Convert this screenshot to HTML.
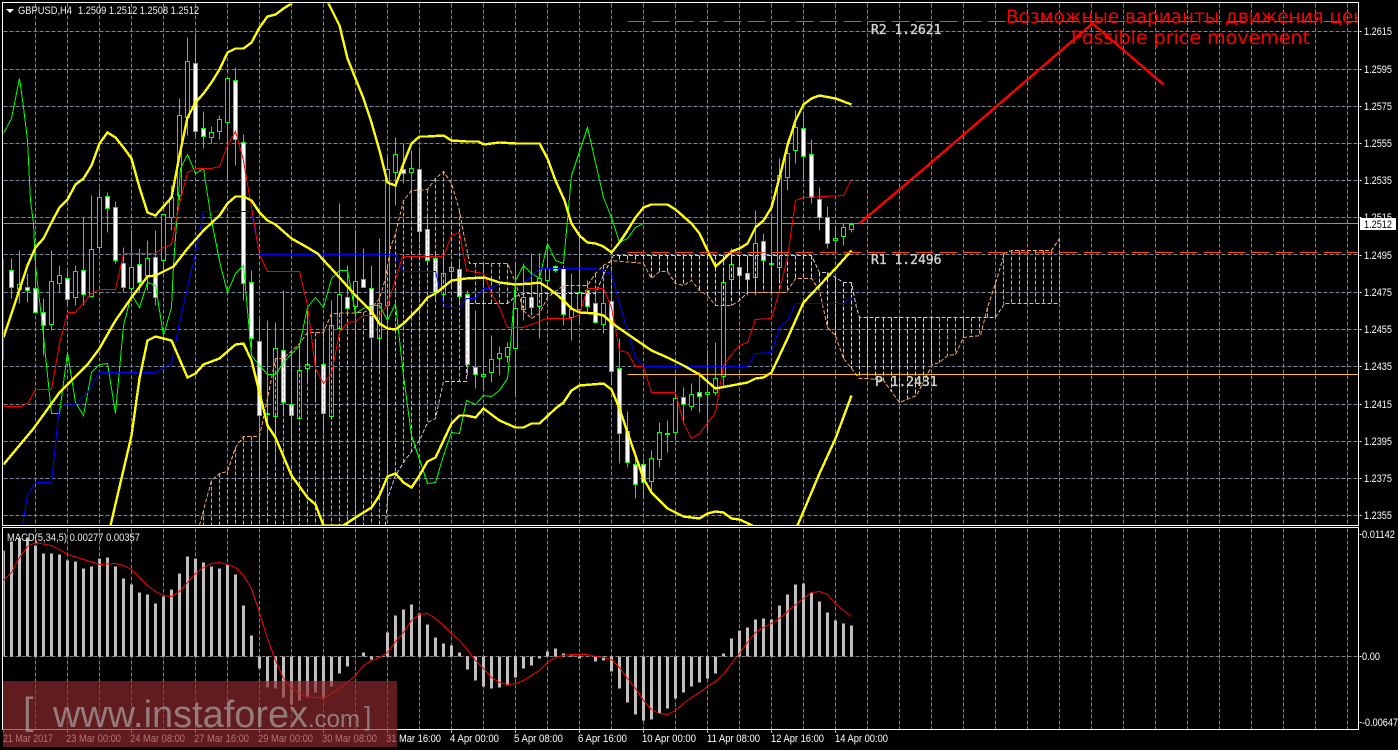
<!DOCTYPE html>
<html><head><meta charset="utf-8"><title>GBPUSD,H4</title>
<style>html,body{margin:0;padding:0;background:#000;width:1398px;height:750px;overflow:hidden}svg{display:block}text{font-family:"Liberation Sans",sans-serif}</style>
</head><body>
<svg width="1398" height="750" viewBox="0 0 1398 750" xmlns="http://www.w3.org/2000/svg">
<defs>
<clipPath id="m"><rect x="3" y="3" width="1355" height="522"/></clipPath>
<clipPath id="d"><rect x="3" y="528" width="1355" height="201"/></clipPath>
</defs>
<rect width="1398" height="750" fill="#000"/>
<g transform="translate(.5 .5)" fill="none" shape-rendering="crispEdges">
<g clip-path="url(#m)">
<path stroke="#778899" stroke-dasharray="4 2" d="M3 31H1358M3 69H1358M3 106H1358M3 143H1358M3 180H1358M3 217H1358M3 254H1358M3 292H1358M3 329H1358M3 366H1358M3 404H1358M3 441H1358M3 478H1358M3 515H1358M35 3V525M67 3V525M99 3V525M131 3V525M163 3V525M195 3V525M227 3V525M259 3V525M291 3V525M323 3V525M355 3V525M387 3V525M419 3V525M451 3V525M483 3V525M515 3V525M547 3V525M579 3V525M611 3V525M643 3V525M675 3V525M707 3V525M739 3V525M771 3V525M803 3V525M835 3V525M867 3V525M899 3V525M931 3V525M963 3V525M995 3V525M1027 3V525M1059 3V525M1091 3V525M1123 3V525M1155 3V525M1187 3V525M1219 3V525M1251 3V525M1283 3V525M1315 3V525M1347 3V525"/>
<path stroke="#8a939a" d="M3 223H1358"/>
<!-- wicks -->
<path stroke="#00ff00" d="M3 258V360M11 258V298M19 250V303M27 273V302M35 243V312M43 298V355M51 250V330M59 265V292M67 270V305M75 265V305M83 217V305M91 195V297M99 188V252M107 192V232M115 201V263M123 247V292M131 230V298M139 248V292M147 240V290M155 230V305M163 214V270M171 185V230M179 98V200M187 37V135M195 32V137M203 111V148M211 126V143M219 115V139M227 78V178M235 67V165M243 134V300M251 270V350M259 318V478M267 320V448M275 322V462M283 290V415M291 352V442M299 345V418M307 305V380M315 340V400M323 325V428M331 300V416M339 203V328M347 265V312M355 230V313M363 248V287M371 265V360M379 238V372M387 157V322M395 137V205M403 143V183M411 150V215M419 146V240M427 217V265M435 250V300M443 250V305M451 262V285M459 260V305M467 290V375M475 310V388M483 303V390M491 335V382M499 346V375M507 342V362M515 263V395M523 263V320M531 253V312M539 253V338M547 243V285M555 265V272M563 265V325M571 273V340M579 233V322M587 280V313M595 290V323M603 287V333M611 290V382M619 338V463M627 411V467M635 458V498M643 458V498M651 450V490M659 422V467M667 420V452M675 379V440M683 387V423M691 383V410M699 372V412M707 350V430M715 342V395M723 268V385M731 248V292M739 255V285M747 258V295M755 210V295M763 233V280M771 213V295M779 158V280M787 140V190M795 110V163M803 112V178M811 139V203M819 187V230M827 206V248M835 225V251M843 223V245M851 222V232"/>
<!-- black bodies -->
<path stroke="#00ff00" fill="#000" d="M17 284h4v5h-4zM49 281h4v43h-4zM57 275h4v8h-4zM73 271h4v26h-4zM89 249h4v47h-4zM97 197h4v50h-4zM129 267h4v21h-4zM145 258h4v17h-4zM161 214h4v46h-4zM169 197h4v20h-4zM177 115h4v80h-4zM185 61h4v56h-4zM209 132h4v5h-4zM217 119h4v12h-4zM225 78h4v44h-4zM265 413h4v1h-4zM273 348h4v68h-4zM297 370h4v48h-4zM305 364h4v4h-4zM329 325h4v91h-4zM337 294h4v34h-4zM353 281h4v25h-4zM377 303h4v35h-4zM385 169h4v136h-4zM393 154h4v18h-4zM409 168h4v4h-4zM441 273h4v21h-4zM449 267h4v4h-4zM481 374h4v2h-4zM489 359h4v13h-4zM497 353h4v5h-4zM505 347h4v9h-4zM513 308h4v40h-4zM521 297h4v12h-4zM537 278h4v28h-4zM545 268h4v12h-4zM569 309h4v8h-4zM577 292h4v17h-4zM601 303h4v21h-4zM649 458h4v23h-4zM657 432h4v27h-4zM665 433h4v1h-4zM673 398h4v34h-4zM689 394h4v12h-4zM705 392h4v2h-4zM713 378h4v14h-4zM721 282h4v94h-4zM729 264h4v15h-4zM753 243h4v34h-4zM777 175h4v92h-4zM785 153h4v24h-4zM793 127h4v23h-4zM833 238h4v2h-4zM841 227h4v9h-4zM849 224h4v5h-4z"/>
<!-- white bodies -->
<path stroke="#00ff00" fill="#fff" d="M9 270h4v17h-4zM25 287h4v3h-4zM33 288h4v24h-4zM41 312h4v13h-4zM65 278h4v21h-4zM81 270h4v24h-4zM105 196h4v12h-4zM113 207h4v53h-4zM121 263h4v24h-4zM137 264h4v18h-4zM153 257h4v40h-4zM193 63h4v68h-4zM201 128h4v8h-4zM233 80h4v59h-4zM241 142h4v141h-4zM249 282h4v56h-4zM257 341h4v74h-4zM281 350h4v52h-4zM289 404h4v11h-4zM321 364h4v49h-4zM345 297h4v11h-4zM361 279h4v8h-4zM369 288h4v49h-4zM401 169h4v4h-4zM417 169h4v62h-4zM425 229h4v31h-4zM433 258h4v34h-4zM457 269h4v27h-4zM465 294h4v70h-4zM473 367h4v7h-4zM529 297h4v10h-4zM553 266h4v4h-4zM561 268h4v46h-4zM585 290h4v16h-4zM593 303h4v19h-4zM609 301h4v70h-4zM617 368h4v65h-4zM625 431h4v31h-4zM633 464h4v20h-4zM641 464h4v18h-4zM681 397h4v7h-4zM697 392h4v4h-4zM737 267h4v8h-4zM745 273h4v6h-4zM761 241h4v19h-4zM769 263h4v1h-4zM801 128h4v28h-4zM809 154h4v43h-4zM817 199h4v18h-4zM825 217h4v26h-4z"/>
<!-- cloud hatch -->
<path stroke="#f4a460" stroke-dasharray="4 2" d="M203 510V525M211 480V525M219 473V525M227 471V525M235 447V525M243 436V525M251 436V525M259 436V525M267 398V525M275 358V525M283 358V525M291 350V525M299 343V525M307 332V525M315 332V525M323 332V525M331 313V525M339 313V525M347 312V525M355 312V525M363 312V525M371 308V525M379 298V525M387 265V498M395 233V475M403 200V462M411 190V451M419 190V440M427 189V422M435 178V418M443 171V381M451 183V381M459 210V381M475 263V303M483 263V303M491 263V303M499 263V303M507 263V303M515 282V300M523 293V310M531 293V318M539 293V313M547 293V297M555 290V293M563 285V293M571 285V293M579 285V293M587 285V293M595 273V293M603 265V293M611 260V293M939 317V362M947 317V355M955 317V354M963 317V337M971 317V336M979 317V335M987 307V317M995 283V317M1003 253V303M1011 250V303M1019 250V303M1027 250V303M1035 250V303M1043 250V303M1051 250V303M1059 238V303"/>
<path stroke="#e8d0d8" stroke-dasharray="4 2" d="M619 255V260M627 255V261M635 255V262M643 255V263M651 255V278M659 255V271M667 255V271M675 255V283M683 255V285M691 255V280M699 255V290M707 255V295M715 255V305M723 255V305M731 255V305M739 255V300M747 255V292M755 255V292M763 255V292M771 255V292M779 255V292M787 255V290M795 255V278M803 255V278M811 255V278M819 272V290M827 272V327M835 277V335M843 282V358M851 282V368M859 317V378M867 317V378M875 317V379M883 317V380M891 317V391M899 317V402M907 317V398M915 317V395M923 317V380M931 317V365"/>
<!-- span B -->
<polyline stroke="#d8bfd8" stroke-dasharray="4 2" points="385,525 387,498 395,475 403,462 411,451 419,440 427,422 435,418 443,381 466,381 467,303 507,303 515,296 523,293 595,293 605,270 613,255 811,255 819,272 827,272 843,282 851,282 856,307 859,317 995,317 1004,303 1059,303"/>
<!-- span A -->
<polyline stroke="#f4a460" stroke-dasharray="4 2" points="199,525 203,510 211,480 219,473 227,471 235,447 243,436 259,436 267,398 275,358 283,358 299,343 307,332 323,332 331,313 363,312 371,308 379,298 385,278 390,247 395,233 403,200 411,190 427,189 435,178 443,171 451,183 459,210 463,233 466,247 469,263 507,263 515,282 523,310 531,318 539,313 547,297 563,285 587,285 595,273 603,265 611,260 643,263 651,278 659,271 667,271 675,283 683,285 691,280 699,290 707,295 715,305 731,305 739,300 747,292 786,292 795,278 811,278 819,290 827,327 835,335 843,358 851,368 859,378 867,378 883,380 899,402 916,395 932,364 939,362 947,355 955,354 963,337 980,335 987,307 995,283 1004,253 1011,250 1051,250 1059,238"/>
<!-- chikou -->
<polyline stroke="#00ff00" points="3,133 11,118 19,78 23,107 27,140 30,200 33,223 35,265 43,335 45,355 51,413 59,413 67,352 75,402 83,415 91,372 99,364 107,363 115,413 123,325 131,294 139,307 147,282 155,285 163,335 171,307 173,265 180,168 187,154 195,173 203,168 211,220 220,265 227,292 235,273 243,265 251,355 259,365 267,374 275,374 283,362 299,345 307,307 315,297 323,307 331,278 339,270 347,270 355,313 363,308 371,305 379,305 387,320 395,303 403,375 411,435 427,483 435,482 443,455 451,432 459,433 466,400 475,404 483,395 491,396 499,390 507,378 509,358 515,280 523,265 531,273 539,278 547,243 555,260 563,263 571,175 587,127 603,197 611,217 619,242 627,238 635,227 643,223"/>
<!-- kijun -->
<polyline stroke="#0000ff" points="22,525 27,495 35,482 51,482 59,405 75,404 87,392 99,372 155,372 171,363 179,322 192,265 193,263 203,211 251,211 259,254 395,254 403,271 435,271 443,303 451,307 459,307 466,298 475,298 483,288 491,288 499,283 523,283 539,268 595,268 611,273 619,303 627,330 635,357 643,366 747,366 755,353 771,352 779,327 787,320 795,303 843,303 851,297"/>
<!-- tenkan -->
<polyline stroke="#ff0000" points="3,406 21,406 28,402 35,389 51,389 59,343 67,312 75,312 91,293 99,289 115,289 123,253 155,253 163,247 171,244 179,203 187,172 195,168 211,168 219,166 227,145 235,131 243,160 259,254 267,271 299,271 307,305 315,368 323,383 331,373 339,332 347,322 355,321 363,315 379,315 387,305 402,256 443,256 451,235 459,232 466,270 483,273 491,293 499,307 507,327 523,327 531,324 546,318 571,318 579,314 587,288 603,288 611,307 619,350 627,352 635,366 643,366 651,392 675,392 683,422 691,438 699,433 715,412 723,365 731,354 739,345 747,342 755,319 771,318 779,290 787,257 795,200 803,197 843,195 851,179"/>
<!-- bollinger -->
<g stroke="#ffff00" stroke-width="2.4">
<polyline points="3,337 27,265 35,247 43,238 51,222 59,207 67,199 75,184 83,178 91,165 99,143 107,132 115,137 123,147 131,158 139,187 147,212 155,215 163,206 171,197 179,155 187,117 195,102 203,93 211,82 219,69 227,52 235,48 243,48 251,42 259,27 267,16 275,14 283,8 291,3 310,-20 328,3 339,25 347,58 355,78 363,98 371,122 379,150 387,182 395,185 403,163 411,143 419,136 427,136 443,135 451,140 466,141 478,141 483,144 499,142 515,143 539,143 547,158 555,180 564,200 571,223 579,235 587,242 595,243 603,246 611,252 619,242 627,230 635,217 643,207 651,204 667,204 675,209 683,216 691,223 699,233 707,250 715,266 723,259 731,251 739,248 747,243 755,227 763,220 771,207 779,177 787,145 795,120 803,104 811,98 819,95 835,98 851,104"/>
<polyline points="3,464 33,428 59,392 87,364 99,348 115,320 131,297 147,276 155,275 173,266 187,248 203,230 219,215 227,203 235,196 243,196 251,200 259,212 267,220 275,224 291,238 307,247 317,253 328,265 339,277 355,295 371,311 379,323 387,328 395,329 403,323 419,307 427,297 435,293 451,280 466,278 484,277 499,282 515,284 531,283 539,282 547,287 555,293 563,300 571,308 579,312 595,313 603,315 611,322 619,328 635,339 651,350 667,357 683,365 699,374 715,388 731,385 747,382 755,378 763,377 771,372 779,355 787,338 795,320 803,302 819,285 835,268 851,250"/>
<polyline points="110,525 131,435 139,378 147,340 155,336 171,340 187,377 195,373 203,364 219,358 235,344 243,343 251,360 259,392 267,425 275,437 291,475 307,497 315,504 323,525 343,525 355,517 371,507 379,495 387,476 395,473 403,482 411,487 419,475 427,461 435,457 451,423 459,415 466,415 475,417 483,408 499,420 515,427 523,427 531,423 539,423 555,408 563,402 571,390 579,385 603,383 611,389 619,408 627,432 635,455 643,478 651,492 667,508 683,516 699,518 707,513 715,511 723,512 731,518 739,519 752,525"/>
<polyline points="797,525 819,473 835,438 851,395"/>
</g>
<!-- pivots -->
<path stroke="#ff4500" stroke-dasharray="18 6" d="M627 21H1358M627 252H1358"/>
<path stroke="#ffc000" d="M627 374H1358"/>
<polyline stroke="#ff0000" stroke-width="2.4" points="859,223 932,161 1092,23 1163,84"/>
</g>
<!-- macd -->
<g clip-path="url(#d)">
<path stroke="#808080" stroke-dasharray="4 2" d="M35 528V729M67 528V729M99 528V729M131 528V729M163 528V729M195 528V729M227 528V729M259 528V729M291 528V729M323 528V729M355 528V729M387 528V729M419 528V729M451 528V729M483 528V729M515 528V729M547 528V729M579 528V729M611 528V729M643 528V729M675 528V729M707 528V729M739 528V729M771 528V729M803 528V729M835 528V729M867 528V729M899 528V729M931 528V729M963 528V729M995 528V729M1027 528V729M1059 528V729M1091 528V729M1123 528V729M1155 528V729M1187 528V729M1219 528V729M1251 528V729M1283 528V729M1315 528V729M1347 528V729M3 656H1358"/>
<path stroke="#c0c0c0" stroke-width="3" d="M3 656V550M11 656V541M19 656V538M27 656V537M35 656V545M43 656V553M51 656V553M59 656V554M67 656V560M75 656V561M83 656V568M91 656V566M99 656V558M107 656V557M115 656V566M123 656V578M131 656V584M139 656V592M147 656V594M155 656V603M163 656V596M171 656V589M179 656V573M187 656V556M195 656V558M203 656V562M211 656V566M219 656V568M227 656V564M235 656V574M243 656V605M251 656V635M259 656V668M267 656V687M275 656V688M283 656V697M291 656V704M299 656V700M307 656V697M315 656V692M323 656V697M331 656V686M339 656V673M347 656V666M363 656V652M371 656V659M387 656V632M395 656V615M403 656V609M411 656V604M419 656V613M427 656V624M435 656V637M443 656V643M451 656V645M459 656V652M467 656V669M475 656V680M483 656V686M491 656V688M499 656V687M507 656V685M515 656V677M523 656V668M531 656V665M539 656V658M547 656V651M555 656V648M563 656V653M571 656V655M579 656V658M595 656V661M603 656V660M611 656V671M619 656V688M627 656V702M635 656V714M643 656V720M651 656V719M659 656V713M667 656V708M675 656V698M683 656V692M691 656V686M699 656V682M707 656V678M715 656V673M723 656V653M731 656V638M739 656V630M747 656V627M755 656V619M763 656V618M771 656V619M779 656V605M787 656V594M795 656V584M803 656V583M811 656V592M819 656V601M827 656V612M835 656V620M843 656V623M851 656V625"/>
<polyline stroke="#ff0000" points="3,580 11,572 19,557 27,546 35,542 51,545 59,549 67,554 83,559 99,564 115,563 123,565 131,569 147,585 155,591 163,595 171,596 179,591 187,582 195,573 203,567 211,563 219,562 227,564 235,567 243,575 251,588 259,612 267,638 275,660 283,678 291,688 299,693 307,696 323,698 331,693 339,688 347,682 355,675 363,665 371,660 379,657 387,652 395,641 403,632 411,620 419,614 427,613 435,618 443,625 451,633 459,640 466,648 475,660 483,668 491,677 499,682 507,684 515,683 523,680 531,675 539,670 547,662 555,657 563,655 571,654 587,654 595,656 603,657 611,659 619,667 627,678 635,688 643,700 651,709 659,713 667,714 675,710 683,703 691,697 699,692 707,686 715,681 723,674 731,663 739,653 747,642 755,632 763,627 771,623 779,618 787,611 795,604 803,598 811,592 819,591 827,594 835,603 843,610 851,616"/>
</g>
<!-- frame & ticks -->
<path stroke="#ffffff" d="M2 2H1358V525H2ZM2 527H1358V729H2ZM1359 31h2M1359 69h2M1359 106h2M1359 143h2M1359 180h2M1359 217h2M1359 255h2M1359 292h2M1359 329h2M1359 366h2M1359 404h2M1359 441h2M1359 478h2M1359 515h2M1359 534h2M1359 656h2M1359 722h2M3 730v2M67 730v2M131 730v2M195 730v2M259 730v2M323 730v2M387 730v2M451 730v2M515 730v2M579 730v2M643 730v2M707 730v2M771 730v2M835 730v2"/>
</g>
<!-- pivot labels -->
<g font-size="13" fill="#d3d3d3" stroke="#d3d3d3" stroke-width=".35">
<text x="871" y="34" style="font-family:'DejaVu Sans Mono',monospace">R2 1.2621</text>
<text x="871" y="264" style="font-family:'DejaVu Sans Mono',monospace">R1 1.2496</text>
<text x="875" y="386" style="font-family:'DejaVu Sans Mono',monospace">P 1.2431</text>
</g>
<!-- red text -->
<g clip-path="url(#m)" fill="#ff0000" font-size="18.4">
<text x="1006" y="23" style="font-family:'DejaVu Sans',sans-serif">Возможные варианты движения цены</text>
<text x="1071" y="44" textLength="239" lengthAdjust="spacingAndGlyphs" style="font-family:'DejaVu Sans',sans-serif">Possible price movement</text>
</g>
<!-- header -->
<path d="M6 9h8l-4 4z" fill="#fff"/>
<text x="18" y="14" font-size="11" fill="#e8f0f4" textLength="54" lengthAdjust="spacingAndGlyphs">GBPUSD,H4</text>
<text x="78" y="14" font-size="11" fill="#e8f0f4" textLength="121" lengthAdjust="spacingAndGlyphs">1.2509 1.2512 1.2508 1.2512</text>
<text x="7" y="541" font-size="11" fill="#e8f0f4" textLength="133" lengthAdjust="spacingAndGlyphs">MACD(5,34,5) 0.00277 0.00357</text>
<!-- axis labels -->
<g font-size="11" fill="#fff" lengthAdjust="spacingAndGlyphs">
<text x="1364" y="35" textLength="28" lengthAdjust="spacingAndGlyphs">1.2615</text>
<text x="1364" y="73" textLength="28" lengthAdjust="spacingAndGlyphs">1.2595</text>
<text x="1364" y="110" textLength="28" lengthAdjust="spacingAndGlyphs">1.2575</text>
<text x="1364" y="147" textLength="28" lengthAdjust="spacingAndGlyphs">1.2555</text>
<text x="1364" y="184" textLength="28" lengthAdjust="spacingAndGlyphs">1.2535</text>
<text x="1364" y="221" textLength="28" lengthAdjust="spacingAndGlyphs">1.2515</text>
<text x="1364" y="259" textLength="28" lengthAdjust="spacingAndGlyphs">1.2495</text>
<text x="1364" y="296" textLength="28" lengthAdjust="spacingAndGlyphs">1.2475</text>
<text x="1364" y="333" textLength="28" lengthAdjust="spacingAndGlyphs">1.2455</text>
<text x="1364" y="370" textLength="28" lengthAdjust="spacingAndGlyphs">1.2435</text>
<text x="1364" y="408" textLength="28" lengthAdjust="spacingAndGlyphs">1.2415</text>
<text x="1364" y="445" textLength="28" lengthAdjust="spacingAndGlyphs">1.2395</text>
<text x="1364" y="482" textLength="28" lengthAdjust="spacingAndGlyphs">1.2375</text>
<text x="1364" y="519" textLength="28" lengthAdjust="spacingAndGlyphs">1.2355</text>
<text x="1362" y="538" textLength="33" lengthAdjust="spacingAndGlyphs">0.01142</text>
<text x="1362" y="660" textLength="18" lengthAdjust="spacingAndGlyphs">0.00</text>
<text x="1362" y="726" textLength="36" lengthAdjust="spacingAndGlyphs">-0.00647</text>
<text x="3" y="742" textLength="50" lengthAdjust="spacingAndGlyphs">21 Mar 2017</text>
<text x="66" y="742" textLength="55" lengthAdjust="spacingAndGlyphs">23 Mar 00:00</text>
<text x="130" y="742" textLength="55" lengthAdjust="spacingAndGlyphs">24 Mar 08:00</text>
<text x="194" y="742" textLength="55" lengthAdjust="spacingAndGlyphs">27 Mar 16:00</text>
<text x="258" y="742" textLength="55" lengthAdjust="spacingAndGlyphs">29 Mar 00:00</text>
<text x="322" y="742" textLength="55" lengthAdjust="spacingAndGlyphs">30 Mar 08:00</text>
<text x="386" y="742" textLength="55" lengthAdjust="spacingAndGlyphs">31 Mar 16:00</text>
<text x="450" y="742" textLength="49" lengthAdjust="spacingAndGlyphs">4 Apr 00:00</text>
<text x="514" y="742" textLength="49" lengthAdjust="spacingAndGlyphs">5 Apr 08:00</text>
<text x="578" y="742" textLength="49" lengthAdjust="spacingAndGlyphs">6 Apr 16:00</text>
<text x="642" y="742" textLength="54" lengthAdjust="spacingAndGlyphs">10 Apr 00:00</text>
<text x="707" y="742" textLength="53" lengthAdjust="spacingAndGlyphs">11 Apr 08:00</text>
<text x="771" y="742" textLength="53" lengthAdjust="spacingAndGlyphs">12 Apr 16:00</text>
<text x="835" y="742" textLength="53" lengthAdjust="spacingAndGlyphs">14 Apr 00:00</text>
</g>
<rect x="1360" y="218" width="36" height="12" fill="#fff"/>
<text x="1364" y="228" font-size="11" fill="#000" textLength="28" lengthAdjust="spacingAndGlyphs">1.2512</text>
<!-- watermark -->
<rect x="3" y="681" width="394" height="66" fill="#8f2a2e" opacity=".67"/>
<g fill="#b4b4b4" opacity=".62">
<text x="23" y="724" font-size="38">[</text>
<text x="53" y="727" font-size="38" textLength="255" lengthAdjust="spacingAndGlyphs">www.instaforex</text>
<text x="308" y="727" font-size="24" textLength="52" lengthAdjust="spacingAndGlyphs">.com</text>
<text x="364" y="725" font-size="26">]</text>
</g>
</svg>
</body></html>
